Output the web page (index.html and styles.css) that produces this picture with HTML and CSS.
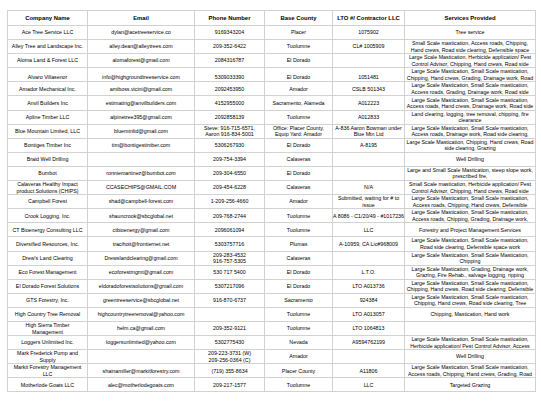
FILE: index.html
```html
<!DOCTYPE html>
<html lang="en">
<head>
<meta charset="utf-8">
<title>Contractors</title>
<link rel="stylesheet" href="styles.css">
</head>
<body>
<div class="sheet">
  <div class="row head">
    <div class="cell">Company Name</div><div class="cell">Email</div><div class="cell">Phone Number</div><div class="cell">Base County</div><div class="cell">LTO #/ Contractor LLC</div><div class="cell svc">Services Provided</div>
  </div>
  <div class="row">
    <div class="cell">Ace Tree Service LLC</div><div class="cell">dylan@acetreeservice.co</div><div class="cell">9169343204</div><div class="cell">Placer</div><div class="cell">1075902</div><div class="cell svc">Tree service</div>
  </div>
  <div class="row">
    <div class="cell">Alley Tree and Landscape Inc.</div><div class="cell">alley.dean@alleytrees.com</div><div class="cell">209-352-6422</div><div class="cell">Tuolumne</div><div class="cell">CL# 1005909</div><div class="cell svc">Small Scale mastication, Access roads, Chipping,<br>Hand crews, Road side clearing, Defensible space</div>
  </div>
  <div class="row">
    <div class="cell">Aloma Land &amp; Forest LLC</div><div class="cell">alomaforest@gmail.com</div><div class="cell">2084316787</div><div class="cell">El Dorado</div><div class="cell"></div><div class="cell svc">Large Scale Mastication, Herbicide application/ Pest<br>Control Advisor, Chipping, Hand crews, Road side</div>
  </div>
  <div class="row low">
    <div class="cell">Alvaro Villasenor</div><div class="cell">info@highgroundtreeservice.com</div><div class="cell">5309033390</div><div class="cell">El Dorado</div><div class="cell">1051481</div><div class="cell svc">Large Scale Mastication, Small Scale mastication,<br>Chipping, Hand crews, Grading, Drainage work, Road</div>
  </div>
  <div class="row">
    <div class="cell">Amador Mechanical Inc.</div><div class="cell">amiboss.vicini@gmail.com</div><div class="cell">2092453950</div><div class="cell">Amador</div><div class="cell">CSLB 501343</div><div class="cell svc">Large Scale Mastication, Small Scale mastication,<br>Access roads, Grading, Drainage work, Road side</div>
  </div>
  <div class="row">
    <div class="cell">Anvil Builders Inc</div><div class="cell">estimating@anvilbuilders.com</div><div class="cell">4152955000</div><div class="cell">Sacramento, Alameda</div><div class="cell">A012223</div><div class="cell svc">Large Scale Mastication, Small Scale mastication,<br>Access roads, Hand crews, Drainage work, Road side</div>
  </div>
  <div class="row">
    <div class="cell">Apline Timber LLC</div><div class="cell">alpinetree395@gmail.com</div><div class="cell">2092858139</div><div class="cell">Tuolumne</div><div class="cell">A012833</div><div class="cell svc">Land clearing, logging, tree removal, chipping, fire<br>clearance</div>
  </div>
  <div class="row">
    <div class="cell">Blue Mountain Limited, LLC</div><div class="cell">bluemtnltd@gmail.com</div><div class="cell">Steve: 916-715-6571,<br>Aaron 916-834-5001</div><div class="cell">Office: Placer County,<br>Equip Yard: Amador</div><div class="cell">A-836 Aaron Bowman under<br>Blue Mtn Ltd</div><div class="cell svc">Large Scale Mastication, Small Scale mastication,<br>Access roads, Drainage work, Road side clearing,</div>
  </div>
  <div class="row">
    <div class="cell">Bontiges Timber Inc</div><div class="cell">tim@bontigestimber.com</div><div class="cell">5306267930</div><div class="cell">El Dorado</div><div class="cell">A-8195</div><div class="cell svc">Large Scale Mastication, Chipping, Hand crews, Road<br>side clearing, Grazing</div>
  </div>
  <div class="row">
    <div class="cell">Braid Well Drilling</div><div class="cell"></div><div class="cell">209-754-3394</div><div class="cell">Calaveras</div><div class="cell"></div><div class="cell svc">Well Drilling</div>
  </div>
  <div class="row">
    <div class="cell">Bumbot</div><div class="cell">ronniemartinez@bumbot.com</div><div class="cell">209-304-6550</div><div class="cell">El Dorado</div><div class="cell"></div><div class="cell svc">Large and Small Scale Mastication, steep slope work,<br>prescribed fire,</div>
  </div>
  <div class="row">
    <div class="cell">Calaveras Healthy Impact<br>product Solutions (CHIPS)</div><div class="cell">CCASECHIPS@GMAIL.COM</div><div class="cell">209-454-6228</div><div class="cell">Calaveras</div><div class="cell">N/A</div><div class="cell svc">Small Scale mastication, Herbicide application/ Pest<br>Control Advisor, Chipping, Hand crews, Road side</div>
  </div>
  <div class="row">
    <div class="cell">Campbell Forest</div><div class="cell">shad@campbell-forest.com</div><div class="cell">1-209-256-4660</div><div class="cell">Amador</div><div class="cell">Submitted, waiting for # to<br>issue</div><div class="cell svc">Large Scale Mastication, Small Scale mastication,<br>Access roads, Chipping, Hand crews, Defensible</div>
  </div>
  <div class="row">
    <div class="cell">Crook Logging, Inc.</div><div class="cell">shauncrook@sbcglobal.net</div><div class="cell">209-768-2744</div><div class="cell">Tuolumne</div><div class="cell nowrap">A 8086 - C1/20/49 - #1017236</div><div class="cell svc">Large Scale Mastication, Small Scale mastication,<br>Access roads, Chipping, Grading, Drainage work,</div>
  </div>
  <div class="row">
    <div class="cell">CT Bioenergy Consulting LLC</div><div class="cell">ctbioenergy@gmail.com</div><div class="cell">2096061094</div><div class="cell">Tuolumne</div><div class="cell">LLC</div><div class="cell svc">Forestry and Project Management Services</div>
  </div>
  <div class="row">
    <div class="cell">Diversified Resources, Inc.</div><div class="cell">tracihoit@frontiernet.net</div><div class="cell">5303757716</div><div class="cell">Plumas</div><div class="cell nowrap">A-10959, CA Lic#968009</div><div class="cell svc">Large Scale Mastication, Small Scale mastication,<br>Road side clearing, Defensible space work</div>
  </div>
  <div class="row">
    <div class="cell">Drew's Land Clearing</div><div class="cell">Drewslandclearing@gmail.com</div><div class="cell">209-283-4532<br>916-757-5305</div><div class="cell">Calaveras</div><div class="cell"></div><div class="cell svc">Large Scale Mastication, Small Scale Mastication,<br>Chipping</div>
  </div>
  <div class="row">
    <div class="cell">Eco Forest Management</div><div class="cell">ecoforestmgmt@gmail.com</div><div class="cell">530 717 5400</div><div class="cell">El Dorado</div><div class="cell">L.T.O.</div><div class="cell svc">Large Scale Mastication, Grading, Drainage work,<br>Grazing, Fire Rehab., salvage logging, ripping</div>
  </div>
  <div class="row">
    <div class="cell">El Dorado Forest Solutions</div><div class="cell nowrap">eldoradoforestsolutions@gmail.com</div><div class="cell">5307217096</div><div class="cell">El Dorado</div><div class="cell">LTO A013736</div><div class="cell svc">Large Scale Mastication, Small Scale mastication,<br>Chipping, Hand crews, Road side clearing, Defensible</div>
  </div>
  <div class="row">
    <div class="cell">GTS Forestry, Inc.</div><div class="cell">greentreeservice@sbcglobal.net</div><div class="cell">916-870-6737</div><div class="cell">Sacramento</div><div class="cell">924384</div><div class="cell svc">Large Scale Mastication, Small Scale mastication,<br>Chipping, Hand crews, Road side clearing, Tree</div>
  </div>
  <div class="row">
    <div class="cell">High Country Tree Removal</div><div class="cell nowrap">highcountrytreeremoval@yahoo.com</div><div class="cell"></div><div class="cell">Tuolumne</div><div class="cell">LTO A013057</div><div class="cell svc">Chipping, Mastication, Hand work</div>
  </div>
  <div class="row">
    <div class="cell">High Sierra Timber<br>Management</div><div class="cell">helm.ca@gmail.com</div><div class="cell">209-352-9121</div><div class="cell">Tuolumne</div><div class="cell">LTO 1064813</div><div class="cell svc"></div>
  </div>
  <div class="row">
    <div class="cell">Loggers Unlimited Inc.</div><div class="cell">loggersunlimited@yahoo.com</div><div class="cell">5302775430</div><div class="cell">Nevada</div><div class="cell">A9594762199</div><div class="cell svc">Large Scale Mastication, Small Scale mastication,<br>Herbicide application/ Pest Control Advisor, Access</div>
  </div>
  <div class="row">
    <div class="cell">Mark Frederick Pump and<br>Supply</div><div class="cell"></div><div class="cell">209-223-3731 (W)<br>209-256-0364 (C)</div><div class="cell">Amador</div><div class="cell"></div><div class="cell svc">Well Drilling</div>
  </div>
  <div class="row">
    <div class="cell">Markit Forestry Management<br>LLC</div><div class="cell">shainamiller@markitforestry.com</div><div class="cell">(719) 355-8634</div><div class="cell">Placer County</div><div class="cell">A11806</div><div class="cell svc">Large Scale Mastication, Small Scale mastication,<br>Access roads, Chipping, Hand crews, Grading, Road</div>
  </div>
  <div class="row">
    <div class="cell">Motherlode Goats LLC</div><div class="cell">alec@motherlodegoats.com</div><div class="cell">209-217-1577</div><div class="cell">Tuolumne</div><div class="cell">LLC</div><div class="cell svc">Targeted Grazing</div>
  </div>
</div>
</body>
</html>
```

FILE: styles.css
```css
html, body {
  margin: 0;
  padding: 0;
  background: #ffffff;
}

body {
  font-family: "Liberation Sans", Arial, sans-serif;
  color: #000000;
}

.sheet {
  display: grid;
  grid-template-columns: 80px 107px 70px 68px 72px 131px;
  grid-template-rows: 15px;
  grid-auto-rows: 14.1px;
  width: max-content;
  margin: 10px 0 0 7px;
  border-top: 1px solid #d2d2d2;
  border-left: 1px solid #d2d2d2;
}

.row {
  display: contents;
}

.cell {
  box-sizing: border-box;
  display: flex;
  align-items: center;
  justify-content: center;
  text-align: center;
  padding: 0 1px;
  border-right: 1px solid #d2d2d2;
  border-bottom: 1px solid #d2d2d2;
  font-size: 5.3px;
  line-height: 6.5px;
  white-space: normal;
}

.cell.nowrap {
  white-space: nowrap;
}

.cell.svc {
  white-space: nowrap;
  overflow: hidden;
}

.head .cell {
  font-weight: bold;
  font-size: 5.9px;
}

.low .cell {
  align-items: flex-end;
  padding-bottom: 1px;
}

.low .cell.svc {
  align-items: center;
  padding-bottom: 0;
}
```
